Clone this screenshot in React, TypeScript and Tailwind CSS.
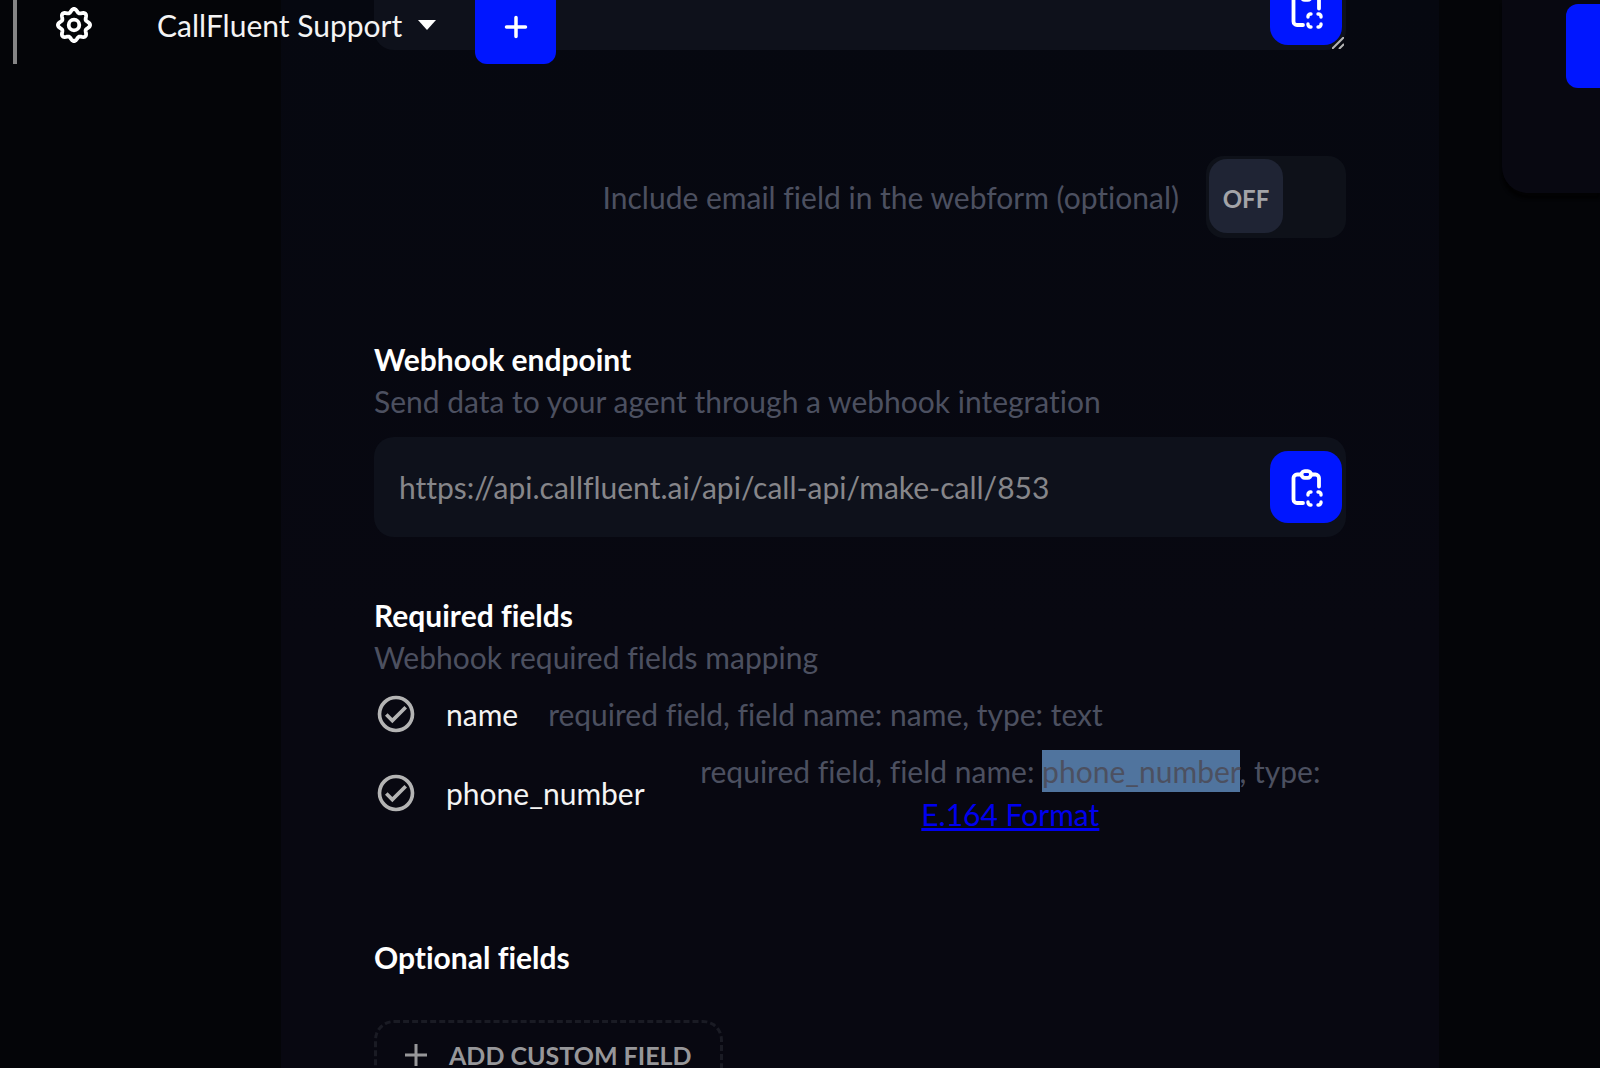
import React from "react";

const gearOutline =
  Array.from({ length: 96 }, (_, i) => {
    const angle = (i / 96) * Math.PI * 2;
    const radius = 14.4 + 1.7 * Math.cos(angle * 8);
    const x = 20 + radius * Math.cos(angle);
    const y = 20 + radius * Math.sin(angle);
    return `${i === 0 ? "M" : "L"}${x.toFixed(2)} ${y.toFixed(2)}`;
  }).join("") + "Z";

function GearIcon() {
  return (
    <svg viewBox="0 0 40 40" className="size-10 shrink-0" fill="none" stroke="currentColor" strokeWidth="3.800" strokeLinejoin="round">
      <path d={gearOutline} />
      <circle cx="20" cy="20" r="5.300" />
    </svg>
  );
}

function ClipboardIcon() {
  return (
    <svg viewBox="0 0 40 40" className="size-10" fill="none" stroke="currentColor" strokeWidth="3.800" strokeLinecap="round" strokeLinejoin="round">
      <rect x="15.500" y="4.200" width="9.500" height="6.600" rx="3.300" />
      <path d="M15 7.500H11a3.500 3.500 0 0 0-3.500 3.500V32.500A3.500 3.500 0 0 0 11 36h6M25.500 7.500H29.500a3.500 3.500 0 0 1 3.500 3.500V19.500" />
      <path strokeWidth="3.400" d="M22 28v-.500a2.500 2.500 0 0 1 2.500-2.500h.500M32 25h.500a2.500 2.500 0 0 1 2.500 2.500v.500M35 35v.500a2.500 2.500 0 0 1-2.500 2.500h-.500M25 38h-.500a2.500 2.500 0 0 1-2.500-2.500v-.500" />
    </svg>
  );
}

function CheckIcon() {
  return (
    <svg viewBox="0 0 24 24" className="mr-7 size-11 shrink-0 text-[#b4b4b4]" fill="currentColor">
      <path d="M12 2a10 10 0 1 0 0 20a10 10 0 0 0 0-20m0 18a8 8 0 1 1 0-16a8 8 0 0 1 0 16m4.590-12.420L10 14.170l-2.590-2.580L6 13l4 4l8-8z" />
    </svg>
  );
}

function CopyButton({ label }: { label: string }) {
  return (
    <button type="button" aria-label={label} className="flex size-[72px] items-center justify-center rounded-[18px] bg-[#0016ff] text-white">
      <ClipboardIcon />
    </button>
  );
}

function Header() {
  return (
    <header className="absolute top-0 left-0 flex h-16 items-start">
      <div className="ml-[13px] h-16 w-[4px] bg-[#858585]" />
      <button type="button" aria-label="Settings" className="mt-[5px] ml-[37px] text-white">
        <GearIcon />
      </button>
      <button type="button" className="mt-1 ml-[63px] flex items-center gap-4 text-[#f4f4f4]">
        CallFluent Support
        <svg viewBox="0 0 18 10" className="h-[10px] w-[18px]" fill="#fff">
          <path d="M0 0h18l-9 10z" />
        </svg>
      </button>
      <button type="button" aria-label="Add" className="ml-[39px] flex h-16 w-[81px] items-center justify-center rounded-b-xl bg-[#0016ff] pb-[10px] text-white">
        <svg viewBox="0 0 24 24" className="size-6" stroke="currentColor" strokeWidth="3.500" strokeLinecap="round">
          <path d="M12 2.500v19M2.500 12h19" />
        </svg>
      </button>
    </header>
  );
}

export default function App() {
  return (
    <div className="relative flex h-screen overflow-hidden bg-[#040508] font-['Lato',sans-serif] text-[30px] leading-[42px] text-[#4c5060] [font-variant-ligatures:none]">
      <div className="w-[281px] shrink-0" />
      <main className="min-w-0 flex-1 bg-linear-to-b from-[#060810] to-[#080811] to-60% px-[93px]">
        <div className="relative -mt-[50px] h-[100px]">
          <textarea aria-label="Webform embed code" readOnly className="block h-full w-full resize-none rounded-[20px] bg-[#0e111b] outline-none" />
          <div className="absolute right-1 bottom-[5px]">
            <CopyButton label="Copy embed code" />
          </div>
          <svg viewBox="0 0 12 12" className="absolute right-[2px] bottom-[1px] size-3" stroke="#b5b5b5" strokeWidth="2">
            <path d="M0 12L12 0M7 12l5-5" />
          </svg>
        </div>

        <label className="mt-[106px] flex h-[82px] items-center justify-end gap-[27px]">
          Include email field in the webform (optional)
          <input type="checkbox" role="switch" className="sr-only" />
          <span className="h-[82px] w-[140px] rounded-[18px] bg-[#0e1119] p-[3px]">
            <span className="flex size-[74px] items-center justify-center rounded-[18px] bg-[#1f2434] pt-1.5 text-2xl font-bold text-[#a3a4a8]">OFF</span>
          </span>
        </label>

        <section className="mt-[100px]">
          <h2 className="font-bold text-white">Webhook endpoint</h2>
          <p>Send data to your agent through a webhook integration</p>
          <div className="mt-[15px] flex h-[100px] items-center rounded-[20px] bg-[#0e111b] pr-1 pl-[25px]">
            <input aria-label="Webhook endpoint" readOnly value="https://api.callfluent.ai/api/call-api/make-call/853" className="min-w-0 flex-1 bg-transparent text-[#86868a] outline-none" />
            <CopyButton label="Copy webhook endpoint" />
          </div>
        </section>

        <section className="mt-[57px]">
          <h2 className="font-bold text-white">Required fields</h2>
          <p>Webhook required fields mapping</p>
          <ul className="mt-[15px] flex flex-col gap-[15px]">
            <li className="flex h-[42px] items-center">
              <CheckIcon />
              <span className="mr-[30px] text-[#f4f4f4]">name</span>
              <span>required field, field name: name, type: text</span>
            </li>
            <li className="flex items-center leading-[43px]">
              <CheckIcon />
              <span className="mr-[30px] text-[#f4f4f4]">phone_number</span>
              <p className="flex-1 text-center">
                required field, field name: <mark className="bg-[#50749e] py-[3px] text-[#4c5060]">phone_number</mark>, type:{" "}
                <a href="#e164" className="whitespace-nowrap text-[#0000ee] underline">E.164 Format</a>
              </p>
            </li>
          </ul>
        </section>

        <section className="mt-[100px]">
          <h2 className="font-bold text-white">Optional fields</h2>
          <button type="button" className="mt-[42px] flex h-[70px] items-center rounded-[20px] border-[3px] border-dashed border-[#1a1b24] px-7 text-[25px] leading-6 font-bold text-[#97979a]">
            <svg viewBox="0 0 22 22" className="mr-[22px] size-[22px]" stroke="currentColor" strokeWidth="3">
              <path d="M11 0v22M0 11h22" />
            </svg>
            ADD CUSTOM FIELD
          </button>
        </section>
      </main>
      <aside className="w-[161px] shrink-0 pl-[63px]">
        <div className="flex h-[193px] justify-end rounded-bl-[26px] bg-[#080811] pt-1 shadow-[0_6px_3px_#020203]">
          <button type="button" aria-label="Open" className="h-[84px] w-[34px] rounded-l-xl bg-[#0016ff]" />
        </div>
      </aside>
      <Header />
    </div>
  );
}
